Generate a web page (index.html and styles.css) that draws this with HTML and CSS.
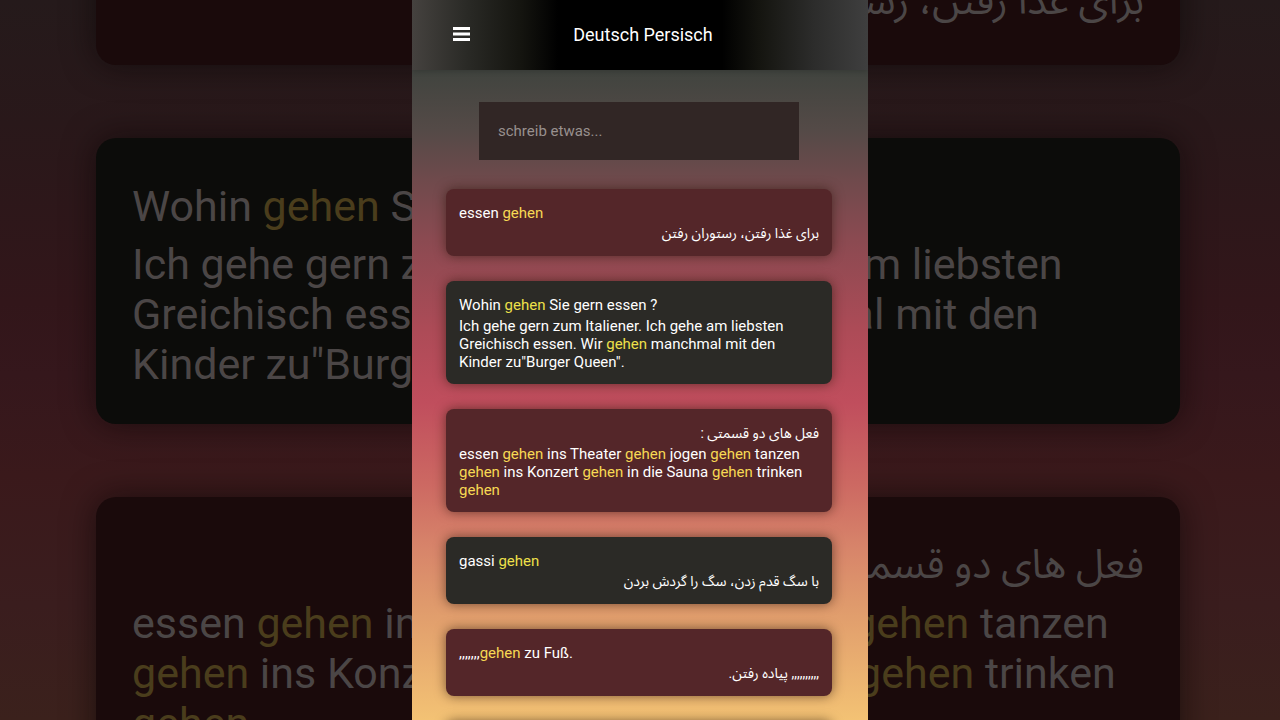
FILE: index.html
```html
<!DOCTYPE html>
<html lang="de">
<head>
  <meta charset="UTF-8">
  <meta name="viewport" content="width=device-width, initial-scale=1.0">
  <title>Deutsch Persisch</title>
  <link rel="stylesheet" href="styles.css">
</head>
<body>

  <div class="backdrop" aria-hidden="true">
    <div class="card">
      <p>essen <mark>gehen</mark></p>
      <p class="fa" dir="rtl" lang="fa">برای غذا رفتن، رستوران رفتن</p>
    </div>
    <div class="card dark">
      <p>Wohin <mark>gehen</mark> Sie gern essen ?</p>
      <p>Ich gehe gern zum Italiener. Ich gehe am liebsten Greichisch essen. Wir <mark>gehen</mark> manchmal mit den Kinder zu"Burger Queen".</p>
    </div>
    <div class="card">
      <p class="fa" dir="rtl" lang="fa">فعل های دو قسمتی :</p>
      <p>essen <mark>gehen</mark> ins Theater <mark>gehen</mark> jogen <mark>gehen</mark> tanzen <mark>gehen</mark> ins Konzert <mark>gehen</mark> in die Sauna <mark>gehen</mark> trinken <mark>gehen</mark></p>
    </div>
  </div>

  <div class="app">
    <header class="header">
      <button class="menu" type="button" aria-label="Menü">
        <svg width="17" height="16" viewBox="0 0 17 16" fill="#fff">
          <rect width="17" height="3" />
          <rect y="5.5" width="17" height="3" />
          <rect y="11" width="17" height="3" />
        </svg>
      </button>
      <h1 class="title">Deutsch Persisch</h1>
    </header>

    <main class="content">
      <input class="search" type="text" placeholder="schreib etwas..." aria-label="schreib etwas">

      <div class="card">
        <p>essen <mark>gehen</mark></p>
        <p class="fa" dir="rtl" lang="fa">برای غذا رفتن، رستوران رفتن</p>
      </div>
      <div class="card dark">
        <p>Wohin <mark>gehen</mark> Sie gern essen ?</p>
        <p>Ich gehe gern zum Italiener. Ich gehe am liebsten Greichisch essen. Wir <mark>gehen</mark> manchmal mit den Kinder zu"Burger Queen".</p>
      </div>
      <div class="card">
        <p class="fa" dir="rtl" lang="fa">فعل های دو قسمتی :</p>
        <p>essen <mark>gehen</mark> ins Theater <mark>gehen</mark> jogen <mark>gehen</mark> tanzen <mark>gehen</mark> ins Konzert <mark>gehen</mark> in die Sauna <mark>gehen</mark> trinken <mark>gehen</mark></p>
      </div>
      <div class="card dark">
        <p>gassi <mark>gehen</mark></p>
        <p class="fa" dir="rtl" lang="fa">با سگ قدم زدن، سگ را گردش بردن</p>
      </div>
      <div class="card">
        <p>,,,,,,,<mark>gehen</mark> zu Fuß.</p>
        <p class="fa" dir="rtl" lang="fa">,,,,,,,,,, پیاده رفتن.</p>
      </div>
      <div class="card dark"></div>
    </main>
  </div>

</body>
</html>
```
FILE: styles.css
```css
* {
  box-sizing: border-box;
}

body {
  margin: 0;
  height: 100vh;
  overflow: hidden;
  position: relative;
  font-family: Roboto, 'Noto Sans Arabic', 'DejaVu Sans', sans-serif;
  font-size: 15px;
  line-height: 18px;
  color: #fff;
}

p {
  margin: 0;
}

mark {
  background: none;
  color: #f7d954;
}

.app {
  position: relative;
  max-width: 456px;
  height: 100%;
  margin: 0 auto;
  overflow: hidden;
  background: linear-gradient(#41443f 10%, #544a47 18%, #6f4a4c 25%, #8a4a51 33%, #ad4b57 46%, #c04e5d 56%, #cc6862 67%, #d7846a 76%, #df9a6c 84%, #f3c274 100%);
}

.header {
  display: grid;
  grid-template-columns: 1fr auto 1fr;
  align-items: center;
  height: 70px;
  padding: 0 35px 0 41px;
  background: linear-gradient(to right, #45423f, #2a2a26 12%, #14140f 24%, #000 32%, #000 68%, #14140f 76%, #2c2c2b 88%, #3f3f3f);
  box-shadow: 0 1px 6px rgba(0, 0, 0, 0.2);
}

.menu {
  justify-self: start;
  padding: 0;
  border: none;
  background: none;
  cursor: pointer;
}

.menu svg {
  display: block;
}

.title {
  margin: 0;
  font-size: 18px;
  font-weight: 400;
  line-height: 24px;
}

.content {
  display: flex;
  flex-direction: column;
  gap: 25px;
  padding: 32px 36px 0 34px;
}

.search {
  align-self: center;
  width: 320px;
  max-width: 100%;
  height: 58px;
  margin-bottom: 4px;
  padding: 0 19px;
  border: none;
  background: #312625;
  color: #fff;
  font: inherit;
}

.search::placeholder {
  color: #98908e;
}

.card {
  flex: none;
  min-height: 67px;
  padding: 15px 13px 13px;
  border-radius: 8px;
  background: #542629;
  box-shadow: 0 0 12px rgba(40, 20, 10, 0.6);
}

.card.dark {
  background: #2b2a26;
}

.card.dark mark {
  color: #eee04a;
}

.card p + p {
  margin-top: 3px;
}

.fa {
  font-size: 14px;
}

.card p + .fa {
  margin-top: 2px;
}

/* large dimmed copy behind the app */
.backdrop {
  position: absolute;
  inset: 0;
  display: flex;
  flex-direction: column;
  justify-content: center;
  gap: 73px;
  padding: 0 100px 58px 96px;
  overflow: hidden;
  background: linear-gradient(#251a1b, #29181a 17%, #32161a 42%, #35171c 52%, #3a191b 66%, #3a1d1e 84%, #3b211c);
  color: #4b4646;
  font-size: 43px;
  line-height: 50px;
}

.backdrop .card {
  min-height: 186px;
  padding: 43px 36px 35px;
  border-radius: 20px;
  background: #1a0a0b;
  box-shadow: 0 0 32px rgba(10, 5, 5, 0.6);
}

.backdrop .card.dark {
  background: #0c0c0a;
}

.backdrop mark,
.backdrop .card.dark mark {
  color: #4a3d1c;
}

.backdrop .card p + p {
  margin-top: 8px;
}

.backdrop .fa {
  font-size: 40px;
}

.backdrop .card p + .fa {
  margin-top: 4px;
}
```
